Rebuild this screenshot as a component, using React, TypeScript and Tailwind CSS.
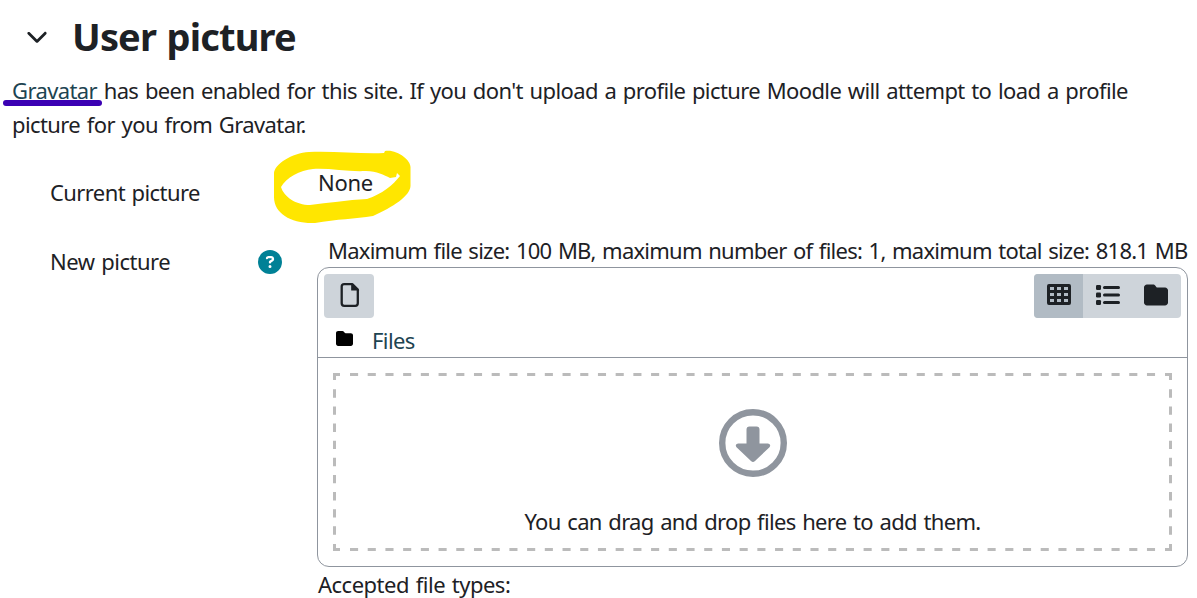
import React from 'react';
import { FaChevronDown, FaCircleQuestion, FaFolder } from 'react-icons/fa6';

const FileIcon = () => (
  <svg className="ml-px size-6" viewBox="0 0 24 24" fill="none">
    <path
      d="M6.2 1.2H14.5L19.8 6.5V20.3Q19.8 22.8 17.3 22.8H6.2Q3.7 22.8 3.7 20.3V3.6Q3.7 1.2 6.2 1.2Z"
      stroke="currentColor"
      strokeWidth="2.3"
      strokeLinejoin="round"
    />
    <path d="M13.8 1.5V7H19.8Z" fill="currentColor" stroke="currentColor" strokeWidth="1.2" />
  </svg>
);

const GridIcon = () => (
  <svg className="size-6" viewBox="0 0 24 24" fill="currentColor">
    <path
      fillRule="evenodd"
      d="M2 1H22Q24 1 24 3V20Q24 22 22 22H2Q0 22 0 20V3Q0 1 2 1ZM3 4V7H7V4ZM10 4V7H14V4ZM17 4V7H21V4ZM3 10V13H7V10ZM10 10V13H14V10ZM17 10V13H21V10ZM3 16V19H7V16ZM10 16V19H14V16ZM17 16V19H21V16Z"
    />
  </svg>
);

const ListIcon = () => (
  <svg className="size-6" viewBox="0 0 24 24" fill="currentColor">
    <rect x="0" y="2" width="5" height="5" rx="1.2" />
    <rect x="0" y="9.5" width="5" height="5" rx="1.2" />
    <rect x="0" y="17" width="5" height="5" rx="1.2" />
    <rect x="7" y="3" width="17" height="3" rx="1.5" />
    <rect x="7" y="10.5" width="17" height="3" rx="1.5" />
    <rect x="7" y="18" width="17" height="3" rx="1.5" />
  </svg>
);

const FolderIcon = () => <FaFolder className="mr-px size-6" />;

const viewModes = [
  { icon: GridIcon, label: 'Display folder with file icons', className: 'bg-[#b1bbc4]' },
  { icon: ListIcon, label: 'Display folder with file details', className: '' },
  { icon: FolderIcon, label: 'Display folder as file tree', className: '' },
];

const DropArrow = () => (
  <svg className="size-[68px] text-[#8f959e]" viewBox="0 0 68 68" fill="currentColor">
    <circle cx="34" cy="34" r="30.8" fill="none" stroke="currentColor" strokeWidth="6.4" />
    <path d="M30.5 17.5H37.5Q40.5 17.5 40.5 20.5V34.5H49Q52.5 35.5 50.5 38.2L36 52Q34 54 32 52L17.5 38.2Q15.5 35.5 19 34.5H27.5V20.5Q27.5 17.5 30.5 17.5Z" />
  </svg>
);

const DashedFrame = () => (
  <svg className="absolute inset-0" width="839" height="178" fill="none" stroke="#bbb" strokeWidth="3">
    <path d="M0 1.5H7M832 1.5H839M0 176.5H7M832 176.5H839" />
    <path d="M1.5 0V7M837.5 0V7M1.5 171V178M837.5 171V178" />
    <path d="M17 1.5H825M17 176.5H825" strokeDasharray="8.1 9.61" />
    <path d="M1.5 16.3V165M837.5 16.3V165" strokeDasharray="8.4 8.72" />
  </svg>
);

const FileManager = () => (
  <div className="h-[300px] w-[871px] rounded-xl border border-[#8f959e]">
    <div className="h-[90px] border-b border-[#8f959e] px-1.5 pt-1.5">
      <div className="flex justify-between">
        <button className="flex h-11 w-[50px] items-center justify-center rounded bg-[#ced4da] pb-0.5" aria-label="Add">
          <FileIcon />
        </button>
        <div className="flex h-11 overflow-hidden rounded bg-[#ced4da]">
          {viewModes.map((mode) => (
            <button
              key={mode.label}
              aria-label={mode.label}
              className={`flex w-[49px] items-center justify-center pb-0.5 ${mode.className}`}
            >
              <mode.icon />
            </button>
          ))}
        </div>
      </div>
      <div className="flex items-center pl-3 pt-[5px]">
        <FaFolder className="mb-1 size-[17px] text-black" />
        <a className="ml-[19px] leading-[34px] text-[#1d4451]">Files</a>
      </div>
    </div>
    <div className="px-[15px] pt-[15px]">
      <div className="relative flex h-[178px] flex-col items-center pt-9">
        <DashedFrame />
        <DropArrow />
        <p className="mt-[27px] whitespace-nowrap leading-[34px] tracking-[-0.67px]">
          You can drag and drop files here to add them.
        </p>
      </div>
    </div>
  </div>
);

const App = () => {
  return (
    <main className="h-[598px] w-[1197px] overflow-hidden bg-white font-['Noto_Sans','Open_Sans',sans-serif] text-[22px] tracking-[-0.6px] text-[#1d2125] [word-spacing:1.5px]">
      <div className="flex h-[73px] items-center pl-[26px]">
        <FaChevronDown className="mb-0.5 size-[22px]" />
        <h3 className="ml-6 whitespace-nowrap text-[38px] font-bold tracking-[-0.85px]">User picture</h3>
      </div>

      <p className="pl-3 leading-[34px]">
        <span className="block whitespace-nowrap tracking-[-0.61px]">
          <a className="relative text-[#1d4451]">
            Gravatar
            <span className="absolute -left-[9px] top-[25px] h-1.5 w-[99px] rounded-full bg-[#3b00b3]" />
          </a>{' '}
          has been enabled for this site. If you don't upload a profile picture Moodle will attempt to load a profile
        </span>
        <span className="block whitespace-nowrap">picture for you from Gravatar.</span>
      </p>

      <div className="flex h-[92px] pl-[50px]">
        <span className="w-[268px] pt-[34px] leading-[34px]">Current picture</span>
        <div className="relative pt-6 leading-[34px]">
          <svg
            className="absolute -left-[46px] top-[7px]"
            width="142"
            height="80"
            viewBox="272 148 142 80"
            fill="#ffe600"
          >
            <path
              fillRule="evenodd"
              d="M274 174C274 164 292 153 309 152C335 151 360 154 384 153L385 151C397 149 410.5 160 410.5 167V186C410 196 393 207 373 216C355 219 337 219 315 223C292 224 274 214 274 197ZM281 187C286 178 300 170 313 169C330 168 348 172 366 171C377 171 384 175 390 178L396 177L397 173L400 176C393 185 382 194 367 199C347 200 328 203 310 205C296 205 284 197 281 187Z"
            />
          </svg>
          <span className="relative tracking-[-0.3px]">None</span>
        </div>
      </div>

      <div className="flex pl-[50px]">
        <div className="flex h-14 w-[267px] shrink-0 items-center">
          <span className="w-[208px] tracking-[-0.5px]">New picture</span>
          <FaCircleQuestion className="mt-0.5 size-6 text-[#008196]" />
        </div>
        <div className="shrink-0">
          <p className="h-[34px] whitespace-nowrap pl-[11px] leading-[34px] tracking-[-0.75px]">
            Maximum file size: 100 MB, maximum number of files: 1, maximum total size: 818.1 MB
          </p>
          <FileManager />
          <p className="whitespace-nowrap pl-px leading-[34px] tracking-[-0.5px]">Accepted file types:</p>
        </div>
      </div>
    </main>
  );
};

export default App;
